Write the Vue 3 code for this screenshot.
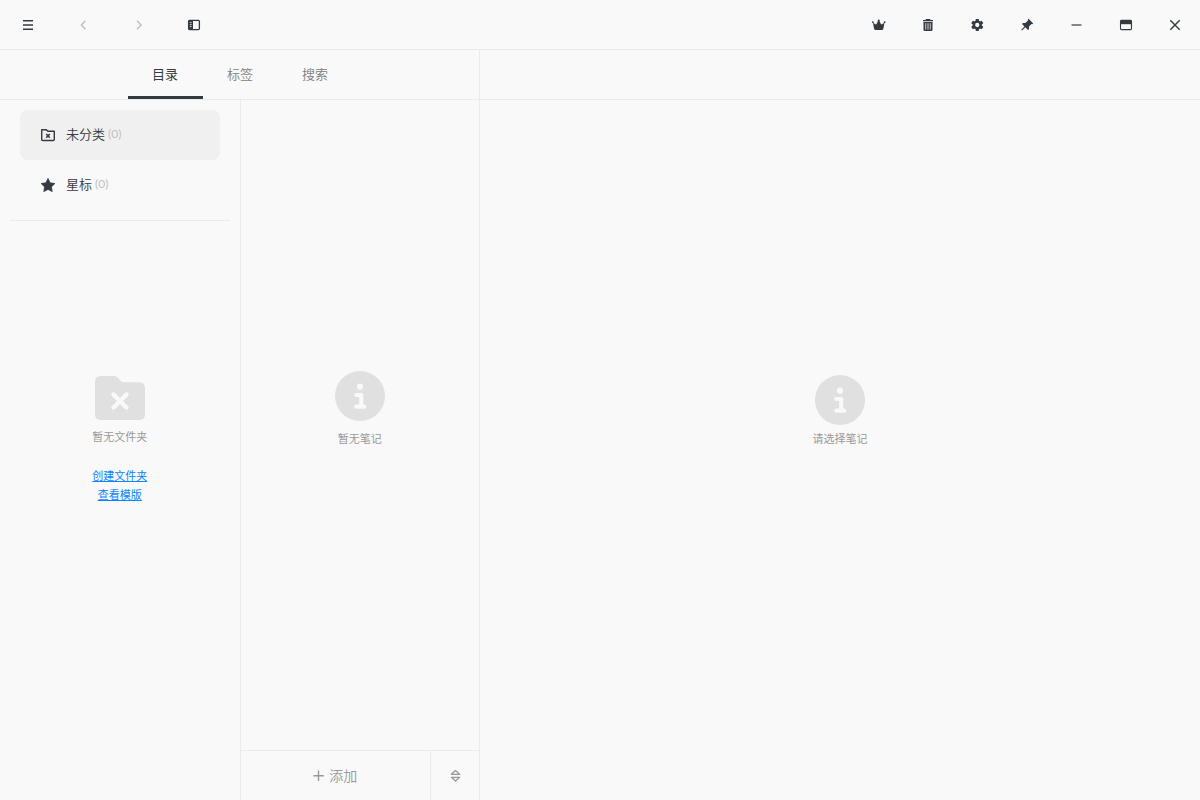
<script setup>
import { ref } from 'vue'

const tabs = ['目录', '标签', '搜索']
const activeTab = ref(0)
</script>

<template>
  <div class="app">
    <header class="bar">
      <div class="group nav">
        <button aria-label="菜单">
          <svg width="16" height="16" viewBox="0 0 16 16"><path d="M3 3.700h10M3 8h10M3 12.300h10" stroke="currentColor" stroke-width="1.500" /></svg>
        </button>
        <button class="faded" aria-label="后退">
          <svg width="16" height="16" viewBox="0 0 16 16"><path d="M10.400 3.800 6.400 8l4 4.200" fill="none" stroke="currentColor" stroke-width="1.500" /></svg>
        </button>
        <button class="faded" aria-label="前进">
          <svg width="16" height="16" viewBox="0 0 16 16"><path d="M6 3.800 10 8l-4 4.200" fill="none" stroke="currentColor" stroke-width="1.500" /></svg>
        </button>
        <button aria-label="侧边栏">
          <svg width="16" height="16" viewBox="0 0 16 16">
            <rect x="2.600" y="3.400" width="10.800" height="9.200" rx="1" fill="none" stroke="currentColor" stroke-width="1.300" />
            <path d="M2.500 3.300H7v9.400H2.500z" fill="currentColor" />
            <path d="M3.800 5.600h1.800M3.800 7.600h1.800M3.800 9.600h1.800" stroke="#f9f9f9" stroke-width=".8" />
          </svg>
        </button>
      </div>
      <div class="group tools">
        <button aria-label="会员">
          <svg width="16" height="16" viewBox="0 0 16 16">
            <path d="M1.900 5.600 4.600 7.500 5.500 7.100 7.200 3.500h1l1.700 3.600.9.400 2.700-1.900-1.100 6q-.300 1.500-1.600 1.500H4.600q-1.300 0-1.600-1.500z" fill="currentColor" />
            <circle cx="1.800" cy="5.200" r=".9" fill="currentColor" /><circle cx="7.700" cy="3.600" r="1" fill="currentColor" /><circle cx="13.600" cy="5.200" r=".9" fill="currentColor" />
          </svg>
        </button>
        <button aria-label="废纸篓">
          <svg width="16" height="16" viewBox="0 0 16 16">
            <path d="M6 2h4l.6.9H13v1.300H3V2.900h2.400zM3.500 5h9v7.700q0 1.300-1.300 1.300H4.800q-1.300 0-1.300-1.300z" fill="currentColor" />
            <path d="M5.500 6.200v6.400M7.200 6.200v6.400M8.800 6.200v6.400M10.500 6.200v6.400" stroke="#f9f9f9" stroke-width=".6" />
          </svg>
        </button>
        <button aria-label="设置">
          <svg width="16" height="16" viewBox="0 0 24 24"><path transform="translate(-.5 .6) scale(.95)" d="M19.140 12.940c.040-.3.060-.610.060-.940s-.020-.640-.070-.940l2.030-1.580a.49.49 0 0 0 .120-.610l-1.920-3.320a.49.49 0 0 0-.590-.220l-2.390.960a7 7 0 0 0-1.620-.940l-.360-2.540A.48.48 0 0 0 13.920 2.400h-3.840a.48.48 0 0 0-.470.410l-.360 2.540a7.300 7.300 0 0 0-1.620.940l-2.390-.960a.48.48 0 0 0-.590.220L2.740 8.870a.48.48 0 0 0 .120.610l2.030 1.580a6 6 0 0 0 0 1.880l-2.030 1.580a.49.49 0 0 0-.120.610l1.920 3.320c.120.220.370.290.590.220l2.390-.960c.5.380 1.030.7 1.620.940l.360 2.540c.050.240.240.410.480.410h3.840c.240 0 .440-.170.470-.410l.360-2.540a7 7 0 0 0 1.620-.940l2.390.960c.220.080.470 0 .590-.220l1.920-3.320a.48.48 0 0 0-.120-.610zM12 15.400a3.400 3.400 0 1 1 0-6.800 3.400 3.400 0 0 1 0 6.800z" fill="currentColor" /></svg>
        </button>
        <button aria-label="置顶">
          <svg width="16" height="16" viewBox="0 0 16 16"><path d="m9.600 1.800 4.600 4.600-.9.800-.8-.2-2.500 2.600.1 2.500-1 .9-2.800-2.800L3 13.500l-.8-.8L5.500 9.500 3 6.900l1-1 2.400.100L9 3.500l-.2-.9z" fill="currentColor" /></svg>
        </button>
        <button aria-label="最小化">
          <svg width="16" height="16" viewBox="0 0 16 16"><path d="M3.500 8h10" stroke="currentColor" stroke-width="1.200" /></svg>
        </button>
        <button aria-label="最大化">
          <svg width="16" height="16" viewBox="0 0 16 16">
            <rect x="2.500" y="3.400" width="11" height="9.200" rx="1" fill="none" stroke="currentColor" stroke-width="1.100" /><path d="M2.500 3.200h11v4h-11z" fill="currentColor" />
          </svg>
        </button>
        <button aria-label="关闭">
          <svg width="16" height="16" viewBox="0 0 16 16"><path d="m3.300 3.300 9.400 9.400m0-9.400-9.400 9.400" stroke="currentColor" stroke-width="1.400" /></svg>
        </button>
      </div>
    </header>

    <div class="body">
      <section class="left">
        <nav class="tabs">
          <button v-for="(tab, i) in tabs" :key="tab" :class="{ active: i === activeTab }" @click="activeTab = i">{{ tab }}</button>
        </nav>
        <div class="panes">
          <aside class="folders">
            <div class="fixed">
              <button class="entry selected">
                <svg width="16" height="16" viewBox="0 0 16 16" fill="none" stroke="currentColor">
                  <path d="M1.700 2.700h4.600l1.600 1.600h6.400v8.200q0 1-1 1H2.700q-1 0-1-1z" stroke-width="1.400" stroke-linejoin="round" />
                  <path d="m6.200 7 3.600 3.800m0-3.800-3.600 3.800" stroke-width="1.500" />
                </svg>
                <span>未分类</span><small>(0)</small>
              </button>
              <button class="entry">
                <svg width="16" height="16" viewBox="0 0 16 16"><path d="m8 1.500 2.100 4.300 4.800.7-3.500 3.400.8 4.700L8 12.400l-4.200 2.200.8-4.700L1.100 6.500l4.800-.7z" fill="currentColor" stroke="currentColor" stroke-width=".8" stroke-linejoin="round" /></svg>
                <span>星标</span><small>(0)</small>
              </button>
            </div>
            <div class="empty links">
              <svg width="50" height="44" viewBox="0 0 50 44">
                <path d="M6 0h13q2.500 0 4 1.800l3 3.500q1 .9 2.500.9H44q6 0 6 6V38q0 6-6 6H6q-6 0-6-6V6q0-6 6-6z" fill="#e0e0e0" />
                <path d="m18.500 18.500 13 13m0-13-13 13" stroke="#f9f9f9" stroke-width="4.400" stroke-linecap="round" />
              </svg>
              <p>暂无文件夹</p>
              <a href="#create">创建文件夹</a>
              <a href="#templates">查看模版</a>
            </div>
          </aside>
          <section class="notes">
            <div class="empty">
              <svg class="info" width="50" height="50" viewBox="0 0 50 50">
                <circle cx="25" cy="25" r="25" fill="#e0e0e0" /><circle cx="25" cy="15.700" r="3.100" fill="#f9f9f9" />
                <path d="M21.200 24h5v11M21.200 35.700h8" fill="none" stroke="#f9f9f9" stroke-width="4.200" stroke-linecap="round" stroke-linejoin="round" />
              </svg>
              <p>暂无笔记</p>
            </div>
            <footer>
              <button class="add">
                <svg width="12" height="12" viewBox="0 0 12 12"><path d="M5.500 .5v10.500M.3 5.700h10.500" stroke="currentColor" stroke-width="1.400" /></svg>
                <span>添加</span>
              </button>
              <button class="sort" aria-label="排序">
                <svg width="12" height="14" viewBox="0 0 12 14"><path d="M2.400 5.300 6.500 1.600l4.100 3.700zM2.400 8.300l4.100 3.700 4.100-3.700z" fill="none" stroke="currentColor" stroke-width="1.300" stroke-linejoin="round" /></svg>
              </button>
            </footer>
          </section>
        </div>
      </section>
      <main>
        <div class="strip"></div>
        <div class="empty">
          <svg class="info" width="50" height="50" viewBox="0 0 50 50">
            <circle cx="25" cy="25" r="25" fill="#e0e0e0" /><circle cx="25" cy="15.700" r="3.100" fill="#f9f9f9" />
            <path d="M21.200 24h5v11M21.200 35.700h8" fill="none" stroke="#f9f9f9" stroke-width="4.200" stroke-linecap="round" stroke-linejoin="round" />
          </svg>
          <p>请选择笔记</p>
        </div>
      </main>
    </div>
  </div>
</template>

<style>
body {
  margin: 0;
  background: #f9f9f9;
}
</style>

<style scoped>
* {
  box-sizing: border-box;
}
.app {
  display: flex;
  flex-direction: column;
  height: 100vh;
  color: #343a40;
  font-family: Lato, "Noto Sans CJK SC", sans-serif;
  font-size: 13px;
}
svg {
  display: block;
  flex: none;
}
button {
  display: flex;
  align-items: center;
  justify-content: center;
  padding: 0;
  border: 0;
  background: none;
  color: inherit;
  font: inherit;
}
.bar {
  display: flex;
  justify-content: space-between;
  height: 50px;
  flex: none;
  border-bottom: 1px solid #ebebeb;
}
.group {
  display: grid;
  grid-auto-flow: column;
  grid-auto-columns: 1fr;
  padding-top: 1px;
}
.nav {
  width: 222px;
}
.tools {
  width: 346px;
}
.faded {
  color: #c0c0c0;
}
.body {
  display: grid;
  grid-template-columns: 2fr 3fr;
  flex: 1;
  min-height: 0;
}
.left {
  display: flex;
  flex-direction: column;
  border-right: 1px solid #ebebeb;
}
.tabs {
  display: flex;
  justify-content: center;
  padding-left: 1px;
  height: 50px;
  flex: none;
  border-bottom: 1px solid #ebebeb;
}
.tabs button {
  width: 75px;
  padding-bottom: 2px;
  color: #808080;
  font-weight: 350;
  line-height: 20px;
  border-top: 3px solid transparent;
  border-bottom: 3px solid transparent;
}
.tabs .active {
  color: #343a40;
  font-weight: 400;
  border-bottom-color: #343a40;
}
.panes {
  display: grid;
  grid-template-columns: 1fr 1fr;
  flex: 1;
  min-height: 0;
}
.folders,
.notes,
main {
  display: flex;
  flex-direction: column;
}
.folders {
  margin-right: -1px;
  border-right: 1px solid #ebebeb;
}
.notes {
  margin-left: 1px;
}
.fixed {
  margin: 0 10px;
  padding: 10px 10px;
  border-bottom: 1px solid #ebebeb;
}
.entry {
  justify-content: flex-start;
  width: 100%;
  height: 50px;
  padding: 0 20px;
  border-radius: 8px;
  font-weight: 350;
  line-height: 20px;
}
.entry svg {
  margin-right: 10px;
}
.entry span,
.entry small {
  padding-bottom: 2px;
}
.selected {
  background: #f0f0f0;
}
.entry small {
  margin-left: 3px;
  color: #c0c0c0;
  font-size: 12px;
  font-weight: 400;
}
.empty {
  display: flex;
  flex: 1;
  flex-direction: column;
  align-items: center;
  justify-content: center;
  font-size: 11px;
  line-height: 19px;
  color: #999;
}
.empty p {
  margin: 8px 0 0;
}
.empty.links {
  padding-bottom: 142px;
}
.links p {
  margin-top: 7px;
  margin-bottom: 20px;
}
.notes .empty {
  padding-bottom: 32px;
}
main .empty {
  padding-bottom: 78px;
}
main .empty p {
  margin-top: 4px;
}
a {
  color: #0a84ff;
}
footer {
  display: flex;
  height: 50px;
  flex: none;
  border-top: 1px solid #ebebeb;
  color: #999;
}
.add {
  flex: 1;
  gap: 4px;
  font-size: 14px;
  font-weight: 350;
  line-height: 20px;
}
.sort {
  width: 49px;
  border-left: 1px solid #ebebeb;
}
.strip {
  height: 50px;
  flex: none;
  border-bottom: 1px solid #ebebeb;
}
</style>
